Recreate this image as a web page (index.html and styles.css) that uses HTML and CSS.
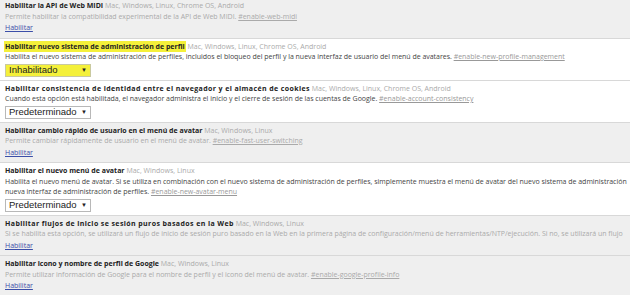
FILE: index.html
```html
<!DOCTYPE html>
<html lang="es">
<head>
  <title>Experimentos</title>
  <link rel="stylesheet" href="styles.css">
</head>
<body>
  <div class="experiments">

    <div class="experiment disabled first">
      <div class="title"><span class="name">Habilitar la API de Web MIDI</span> <span class="platforms">Mac, Windows, Linux, Chrome OS, Android</span></div>
      <div class="desc">Permite habilitar la compatibilidad experimental de la API de Web MIDI. <a class="permalink" href="#">#enable-web-midi</a></div>
      <a class="action" href="#">Habilitar</a>
    </div>

    <div class="experiment">
      <div class="title"><span class="name marked">Habilitar nuevo sistema de administración de perfil</span> <span class="platforms">Mac, Windows, Linux, Chrome OS, Android</span></div>
      <div class="desc">Habilita el nuevo sistema de administración de perfiles, incluidos el bloqueo del perfil y la nueva interfaz de usuario del menú de avatares. <a class="permalink" href="#">#enable-new-profile-management</a></div>
      <div class="select marked-select"><span>Inhabilitado</span><span class="arrow">▼</span></div>
    </div>

    <div class="experiment">
      <div class="title wide"><span class="name">Habilitar consistencia de identidad entre el navegador y el almacén de cookies</span> <span class="platforms">Mac, Windows, Linux, Chrome OS, Android</span></div>
      <div class="desc">Cuando esta opción está habilitada, el navegador administra el inicio y el cierre de sesión de las cuentas de Google. <a class="permalink" href="#">#enable-account-consistency</a></div>
      <div class="select"><span>Predeterminado</span><span class="arrow">▼</span></div>
    </div>

    <div class="experiment disabled">
      <div class="title"><span class="name">Habilitar cambio rápido de usuario en el menú de avatar</span> <span class="platforms">Mac, Windows, Linux</span></div>
      <div class="desc">Permite cambiar rápidamente de usuario en el menú de avatar. <a class="permalink" href="#">#enable-fast-user-switching</a></div>
      <a class="action" href="#">Habilitar</a>
    </div>

    <div class="experiment">
      <div class="title"><span class="name">Habilitar el nuevo menú de avatar</span> <span class="platforms">Mac, Windows, Linux</span></div>
      <div class="desc">Habilita el nuevo menú de avatar. Si se utiliza en combinación con el nuevo sistema de administración de perfiles, simplemente muestra el menú de avatar del nuevo sistema de administración<br>nueva interfaz de administración de perfiles. <a class="permalink" href="#">#enable-new-avatar-menu</a></div>
      <div class="select"><span>Predeterminado</span><span class="arrow">▼</span></div>
    </div>

    <div class="experiment disabled">
      <div class="title wide"><span class="name">Habilitar flujos de inicio se sesión puros basados en la Web</span> <span class="platforms">Mac, Windows, Linux</span></div>
      <div class="desc">Si se habilita esta opción, se utilizará un flujo de inicio de sesión puro basado en la Web en la primera página de configuración/menú de herramientas/NTP/ejecución. Si no, se utilizará un flujo</div>
      <a class="action" href="#">Habilitar</a>
    </div>

    <div class="experiment disabled">
      <div class="title"><span class="name">Habilitar icono y nombre de perfil de Google</span> <span class="platforms">Mac, Windows, Linux</span></div>
      <div class="desc">Permite utilizar información de Google para el nombre de perfil y el icono del menú de avatar. <a class="permalink" href="#">#enable-google-profile-info</a></div>
      <a class="action" href="#">Habilitar</a>
    </div>

  </div>
</body>
</html>
```

FILE: styles.css
```css
body {
  margin: 0;
  font-family: "Open Sans", "Noto Sans", sans-serif;
  font-size: 7px;
  background-color: #efefef;
  overflow: hidden;
}

.experiments {
  width: 630px;
}

.experiment {
  padding: 3px 5px 3px 5px;
  background-color: #fff;
  border-bottom: 1px solid #d8d8d8;
  white-space: nowrap;
  line-height: 10.5px;
  color: #444;
}

.experiment.first {
  padding-top: 1px;
}

.experiment.disabled {
  background-color: #efefef;
  color: #aaa;
  padding-bottom: 4px;
}

.title {
  color: #aaa;
}

.title.wide .name {
  letter-spacing: 0.4px;
}

.name {
  font-weight: bold;
  color: #222;
}

.marked {
  background-color: #f4f03a;
  padding: 1px 1px;
  margin-left: -1px;
}

.desc {
  letter-spacing: -0.02px;
}

.permalink {
  color: #999;
}

.disabled .permalink {
  color: #aaa;
}

.action {
  display: inline-block;
  margin-top: 1px;
  color: #3b4ea8;
}

.select {
  display: inline-flex;
  align-items: center;
  justify-content: space-between;
  width: 78px;
  height: 11px;
  margin-top: 1px;
  padding: 0 3px 0 3px;
  border: 1px solid #b8b8b8;
  background-color: #fff;
  font-family: "Liberation Sans", Arial, sans-serif;
  font-size: 9.5px;
  color: #222;
}

.select .arrow {
  font-size: 6px;
}

.marked-select {
  background-color: #f4f03a;
  border-color: #c9c9a0;
}
```
